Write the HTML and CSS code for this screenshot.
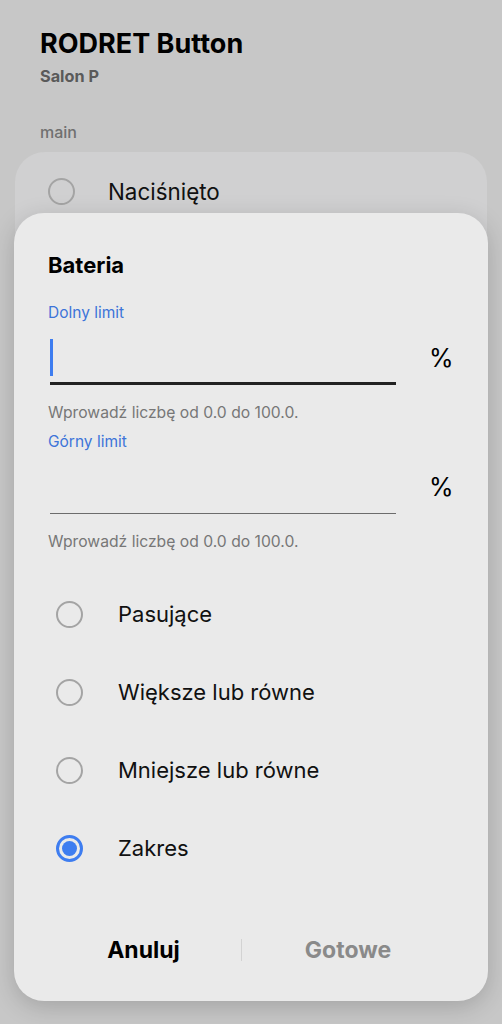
FILE: index.html
```html
<!DOCTYPE html>
<html lang="pl">
<head>
<meta charset="utf-8">
<link rel="stylesheet" href="styles.css">
</head>
<body>
<div class="page">
  <header class="head">
    <h1 class="title">RODRET Button</h1>
    <div class="sub">Salon P</div>
  </header>
  <div class="section">main</div>
  <div class="bgcard">
    <div class="bgrow"><span class="radio"></span><span class="bglabel">Naciśnięto</span></div>
  </div>
</div>

<div class="dialog">
  <h2 class="dtitle">Bateria</h2>

  <div class="field">
    <div class="flabel">Dolny limit</div>
    <div class="frow">
      <div class="input active"><span class="caret"></span></div>
      <span class="unit">%</span>
    </div>
    <div class="help">Wprowadź liczbę od 0.0 do 100.0.</div>
  </div>

  <div class="field second">
    <div class="flabel">Górny limit</div>
    <div class="frow">
      <div class="input"></div>
      <span class="unit">%</span>
    </div>
    <div class="help">Wprowadź liczbę od 0.0 do 100.0.</div>
  </div>

  <ul class="options">
    <li class="opt"><span class="radio"></span><span class="olabel">Pasujące</span></li>
    <li class="opt"><span class="radio"></span><span class="olabel">Większe lub równe</span></li>
    <li class="opt"><span class="radio"></span><span class="olabel">Mniejsze lub równe</span></li>
    <li class="opt"><span class="radio on"></span><span class="olabel">Zakres</span></li>
  </ul>

  <div class="actions">
    <button class="btn cancel">Anuluj</button>
    <span class="sep"></span>
    <button class="btn done">Gotowe</button>
  </div>
</div>
</body>
</html>
```

FILE: styles.css
```css
* { box-sizing: border-box; }
html, body { margin: 0; padding: 0; }
body {
  width: 502px;
  height: 1024px;
  overflow: hidden;
  background: #c7c7c7;
  font-family: Inter, "Noto Sans", sans-serif;
  color: #000;
  position: relative;
}
.page { padding: 0 15px; }
.head { padding: 28px 25px 0; }
.title {
  margin: 0;
  font-size: 27px;
  font-weight: 700;
  line-height: 32px;
}
.sub {
  margin-top: 5px;
  font-size: 16.3px;
  font-weight: 700;
  color: #5a5a5a;
  line-height: 22px;
}
.section {
  padding: 35px 25px 0;
  font-size: 16px;
  font-weight: 500;
  color: #707070;
  line-height: 20px;
}
.bgcard {
  margin-top: 10px;
  background: #d0d0d1;
  border-radius: 30px;
  height: 120px;
}
.bgrow {
  display: flex;
  align-items: center;
  padding: 26px 0 0 33px;
}
.bgrow .radio { margin-right: 33px; }
.bglabel { font-size: 22.4px; color: #111; line-height: 26px; }

.radio {
  width: 27px;
  height: 27px;
  border-radius: 50%;
  border: 2px solid #a4a4a4;
  display: inline-block;
  flex: none;
  position: relative;
}
.radio.on {
  border: 3px solid #3e7df0;
}
.radio.on::after {
  content: "";
  position: absolute;
  left: 3px; top: 3px;
  width: 15px; height: 15px;
  border-radius: 50%;
  background: #3e7df0;
}

.dialog {
  position: absolute;
  left: 14px;
  top: 213px;
  width: 474px;
  height: 788px;
  background: #eaeaea;
  border-radius: 30px;
  box-shadow: 0 6px 24px rgba(0,0,0,0.18);
  padding: 39px 34px 0 34px;
}
.dtitle {
  margin: 0;
  font-size: 22px;
  font-weight: 700;
  line-height: 26px;
}
.field { margin-top: 25px; }
.field.second { margin-top: 9px; }
.flabel {
  font-size: 15.5px;
  color: #3d74d9;
  line-height: 20px;
}
.frow {
  display: flex;
  align-items: flex-end;
  height: 62px;
}
.input {
  width: 346px;
  margin-left: 2px;
  height: 48px;
  border-bottom: 1px solid #6c6c6c;
  display: flex;
  align-items: flex-start;
}
.input.active {
  border-bottom: 3px solid #222;
}
.caret {
  width: 3px;
  height: 37px;
  background: #3e7df0;
  margin-top: 2px;
}
.unit {
  margin-left: 33px;
  font-size: 25px;
  line-height: 28px;
  align-self: flex-start;
  margin-top: 21px;
}
.help {
  margin-top: 18px;
  font-size: 15.7px;
  color: #777;
  line-height: 20px;
}
.options {
  list-style: none;
  margin: 23px 0 0;
  padding: 0 0 0 8px;
}
.opt {
  display: flex;
  align-items: center;
  height: 78px;
}
.opt .radio { margin-right: 35px; }
.olabel { font-size: 22px; color: #111; }

.actions {
  display: flex;
  align-items: center;
  margin: 49px -34px 0;
  padding-left: 50px;
}
.btn {
  background: none;
  border: 0;
  font-family: inherit;
  font-size: 23px;
  font-weight: 700;
  padding: 0;
  text-align: center;
}
.cancel { color: #000; width: 159px; }
.done { color: #8a8a8a; width: 212px; }
.sep {
  width: 1px;
  height: 22px;
  background: #d3d3d3;
  margin-left: 18px;
}
```
